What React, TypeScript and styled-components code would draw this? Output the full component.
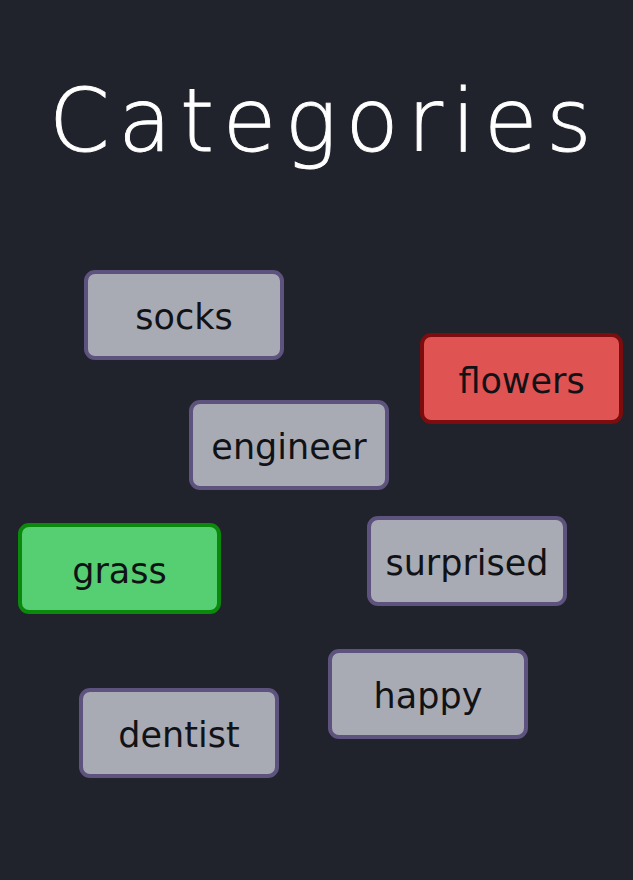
import React from "react";
import styled, { createGlobalStyle } from "styled-components";

const GlobalStyle = createGlobalStyle`
  html, body {
    margin: 0;
    padding: 0;
    background: #20232b;
  }
  body {
    font-family: "DejaVu Sans", sans-serif;
  }
`;

const Page = styled.div`
  width: 633px;
  height: 880px;
  background: #20232b;
  display: flex;
  flex-direction: column;
  align-items: center;
  overflow: hidden;
`;

const Title = styled.h1`
  margin: 0;
  padding-top: 71px;
  padding-left: 16px;
  font-family: "DejaVu Sans", sans-serif;
  font-weight: 200;
  font-size: 87px;
  line-height: 100px;
  letter-spacing: 8.5px;
  color: #ffffff;
  text-align: center;
  white-space: nowrap;
  -webkit-text-stroke: 0.9px #ffffff;
`;

const Canvas = styled.div`
  position: relative;
  width: 633px;
  flex: 1;
  margin-top: 29px;
`;

type Variant = "neutral" | "wrong" | "right";

const palette: Record<Variant, { bg: string; border: string }> = {
  neutral: { bg: "#a9abb4", border: "#5e537f" },
  wrong: { bg: "#e05353", border: "#7c0c0e" },
  right: { bg: "#55cf72", border: "#0b890c" },
};

const Tag = styled.div<{ $variant: Variant; $x: number; $y: number; $big?: boolean }>`
  position: absolute;
  left: ${(p) => p.$x}px;
  top: ${(p) => p.$y}px;
  box-sizing: border-box;
  width: ${(p) => (p.$big ? 203 : 200)}px;
  height: ${(p) => (p.$big ? 91 : 90)}px;
  display: flex;
  align-items: center;
  justify-content: center;
  padding-top: 4px;
  background: ${(p) => palette[p.$variant].bg};
  border: 4px solid ${(p) => palette[p.$variant].border};
  border-radius: 11px;
  font-family: "DejaVu Sans", sans-serif;
  font-size: 35px;
  color: #111216;
`;

const tags: { label: string; x: number; y: number; variant: Variant; big?: boolean }[] = [
  { label: "socks", x: 84, y: 70, variant: "neutral" },
  { label: "flowers", x: 420, y: 133, variant: "wrong", big: true },
  { label: "engineer", x: 189, y: 200, variant: "neutral" },
  { label: "grass", x: 18, y: 323, variant: "right", big: true },
  { label: "surprised", x: 367, y: 316, variant: "neutral" },
  { label: "happy", x: 328, y: 449, variant: "neutral" },
  { label: "dentist", x: 79, y: 488, variant: "neutral" },
];

export default function App() {
  return (
    <Page>
      <GlobalStyle />
      <Title>Categories</Title>
      <Canvas>
        {tags.map((t) => (
          <Tag key={t.label} $variant={t.variant} $x={t.x} $y={t.y} $big={t.big}>
            {t.label}
          </Tag>
        ))}
      </Canvas>
    </Page>
  );
}
